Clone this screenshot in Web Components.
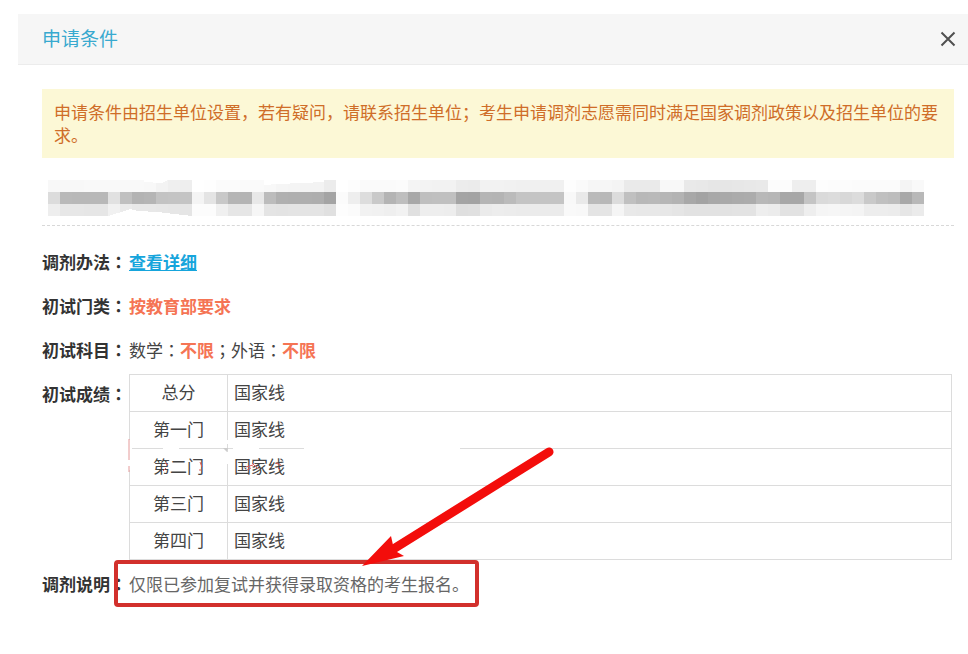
<!DOCTYPE html>
<html lang="zh-CN">
<head>
<meta charset="utf-8">
<title>申请条件</title>
<style>
  body {
    margin: 0;
    background: #fff;
    color: #444;
    font-family: "Noto Sans CJK SC", "Noto Sans", sans-serif;
    font-size: 17px;
    line-height: 23px;
  }
  strong {
    color: #f57454;
  }
  a {
    color: #16a5dc;
    font-weight: bold;
  }
  .mark {
    font-family: "Noto Sans CJK JP", sans-serif;
  }
</style>
</head>
<body>
<condition-dialog>
  <span slot="title">申请条件</span>
  <notice-box>申请条件由招生单位设置，若有疑问，请联系招生单位；考生申请调剂志愿需同时满足国家调剂政策以及招生单位的要求。</notice-box>
  <masked-line></masked-line>
  <info-row label="调剂办法"><a href="#detail">查看详细</a></info-row>
  <info-row label="初试门类"><strong>按教育部要求</strong></info-row>
  <info-row label="初试科目">数学<span class="mark" lang="ja">：</span><strong>不限</strong><span class="mark" lang="ja">；</span>外语<span class="mark" lang="ja">：</span><strong>不限</strong></info-row>
  <info-row label="初试成绩"><score-table></score-table></info-row>
  <info-row label="调剂说明"><marked-note>仅限已参加复试并获得录取资格的考生报名。</marked-note></info-row>
</condition-dialog>

<script>
class ConditionDialog extends HTMLElement {
  constructor() {
    super();
    this.attachShadow({ mode: "open" });
    this.shadowRoot.innerHTML = `
      <style>
        :host {
          display: block;
          padding: 14px 0 40px 18px;
        }
        header {
          display: flex;
          justify-content: space-between;
          align-items: center;
          height: 50px;
          padding: 0 12px 0 24px;
          background: #f6f6f6;
          border-bottom: 1px solid #ececec;
        }
        h2 {
          margin: 0;
          padding-bottom: 4px;
          color: #38a9cf;
          font-size: 19px;
          font-weight: normal;
        }
        button {
          display: flex;
          padding: 0;
          border: 0;
          background: none;
          cursor: pointer;
        }
        section {
          padding: 24px 14px 0 24px;
        }
      </style>
      <header>
        <h2><slot name="title"></slot></h2>
        <button type="button" aria-label="关闭">
          <svg width="16" height="16" viewBox="0 0 16 16" fill="none" stroke="#505050" stroke-width="2">
            <path d="M1.5 1.5L14.5 14.5M14.5 1.5L1.5 14.5"/>
          </svg>
        </button>
      </header>
      <section><slot></slot></section>
    `;
  }
}

class NoticeBox extends HTMLElement {
  constructor() {
    super();
    this.attachShadow({ mode: "open" });
    this.shadowRoot.innerHTML = `
      <style>
        :host {
          display: block;
          padding: 11px 12px 12px;
          background: #fcf8d6;
          color: #cf6d28;
        }
      </style>
      <slot></slot>
    `;
  }
}

// grey level of each mosaic cell, two hex digits per cell
const MOSAIC = [
  `f8 f8 f8 f9 f9 f9 f9 f9 f8 f3 ef ee ff fe fb fb fa fa f8 f5 f4 f3 f3 ec
   ff fd fa fa fa fb f4 f3 f2 f2 ec eb f2 f2 f1 f0 f0 f0 f0 fd fa f6 f6 f4
   ea ea ea f8 f8 e9 e8 e6 e6 e7 e8 e9 fc fc ee ee fd fc fc fb fb fb fb f4 f9`,
  `dc b9 b8 b8 b8 e1 c0 b3 b5 c3 c4 c4 f4 e4 c8 b5 b4 e8 bc b0 af af ae a4
   fb ee dd c9 b4 be a8 bf c0 c0 a4 a3 b5 b4 bb c4 c4 c4 c4 f8 e9 ba b8 dc
   c0 b8 b9 b6 b3 a8 a3 a8 a9 ab ac b8 b6 a7 a7 c4 da dc d8 dc c9 c0 bd a8 b8`,
  `ee e7 e7 e6 e6 f1 eb e8 e8 e7 e6 e5 fc fc f0 e6 e6 f6 e4 e3 e4 e4 e4 e0
   fd fb f2 f1 ef f2 e0 ee ee ed df e0 eb ed ec eb eb eb eb f9 f8 e4 e5 f5
   e9 e8 e8 e7 e5 e2 e2 e2 e2 e3 e3 ee ec e2 e2 ee f5 f6 f5 f4 ed ed ec e6 eb`
];

class MaskedLine extends HTMLElement {
  constructor() {
    super();
    this.attachShadow({ mode: "open" });
    let cells = "";
    MOSAIC.forEach((row, y) => {
      row.split(/\s+/).forEach((c, x) => {
        cells += `<rect x="${x * 12}" y="${y * 12}" width="12" height="12" fill="#${c + c + c}"/>`;
      });
    });
    this.shadowRoot.innerHTML = `
      <style>
        :host {
          display: block;
          padding: 22px 30px 9px 6px;
          margin-bottom: 14px;
          border-bottom: 1px dashed #d8d8d8;
        }
        svg {
          display: block;
          width: 100%;
          height: 36px;
        }
      </style>
      <svg viewBox="0 0 876 36" preserveAspectRatio="none" shape-rendering="crispEdges" aria-hidden="true">
        ${cells}
        <path fill="#fff" d="M60 36L66 34L74 32L82 29L90 31L110 32L126 34L144 36Z"/>
        <path fill="#fff" d="M96 0H120L114 3L96 2ZM216 0H276V2L230 4L216 5Z"/>
      </svg>
    `;
  }
}

class InfoRow extends HTMLElement {
  constructor() {
    super();
    this.attachShadow({ mode: "open" });
    this.shadowRoot.innerHTML = `
      <style>
        :host {
          display: flex;
          line-height: 44px;
        }
        .label {
          flex: none;
          width: 87px;
          color: #333;
          font-weight: bold;
        }
        .mark {
          font-family: "Noto Sans CJK JP", sans-serif;
        }
        .value {
          flex: 1;
          min-width: 0;
        }
      </style>
      <div class="label">${this.getAttribute("label")}<span class="mark" lang="ja">：</span></div>
      <div class="value"><slot></slot></div>
    `;
  }
}

class ScoreTable extends HTMLElement {
  constructor() {
    super();
    this.attachShadow({ mode: "open" });
    const rows = ["总分", "第一门", "第二门", "第三门", "第四门"];
    this.shadowRoot.innerHTML = `
      <style>
        :host {
          display: block;
          position: relative;
          padding: 2px 2px 2px 0;
          line-height: 34px;
        }
        table {
          width: 100%;
          border-collapse: collapse;
          table-layout: fixed;
        }
        th, td {
          padding: 0 0 2px;
          border: 1px solid #dcdcdc;
          font-weight: normal;
        }
        th {
          width: 97px;
        }
        td {
          padding-left: 6px;
        }
        svg {
          position: absolute;
          left: -2px;
          top: 62px;
          pointer-events: none;
        }
      </style>
      <table>
        ${rows.map(name => `<tr><th scope="row">${name}</th><td>国家线</td></tr>`).join("")}
      </table>
      <!-- rubbed out border and what is left of the old pen marks -->
      <svg width="340" height="50" viewBox="0 0 340 50" aria-hidden="true">
        <path fill="#fff" d="M177 12H333V17H177ZM0 6H5V36H0ZM98 18H102V30H98ZM98 6H102V10H98ZM106 12H132V17H106ZM36 12H52V17H36Z"/>
        <g fill="none" stroke="#e05a5a">
          <path d="M2 5V26M2 32V38" stroke="#e59a9a"/>
          <path d="M38 29L41 31M39 34L36 37M73 28L75 33M73 35V37M119 33L126 31M125 29L131 35M149 29L154 31M151 34L153 36M120 36L124 34"/>
        </g>
        <path fill="#ccc" d="M96 14H101L100 18Z"/>
      </svg>
    `;
  }
}

class MarkedNote extends HTMLElement {
  constructor() {
    super();
    this.attachShadow({ mode: "open" });
    this.shadowRoot.innerHTML = `
      <style>
        :host {
          display: block;
          position: relative;
          color: #666;
        }
        svg {
          position: absolute;
          left: -19px;
          top: -123px;
          pointer-events: none;
        }
      </style>
      <slot></slot>
      <svg width="460" height="175" viewBox="0 0 460 175" aria-hidden="true">
        <rect x="6" y="123" width="361" height="43" rx="2" fill="none" stroke="#d2302c" stroke-width="4"/>
        <path d="M439 13L285 109" stroke="#f30d0b" stroke-width="9" stroke-linecap="round"/>
        <path d="M252 127L281 97L283 106L287 113L294 117Z" fill="#f30d0b"/>
      </svg>
    `;
  }
}

customElements.define("condition-dialog", ConditionDialog);
customElements.define("notice-box", NoticeBox);
customElements.define("masked-line", MaskedLine);
customElements.define("info-row", InfoRow);
customElements.define("score-table", ScoreTable);
customElements.define("marked-note", MarkedNote);
</script>
</body>
</html>
